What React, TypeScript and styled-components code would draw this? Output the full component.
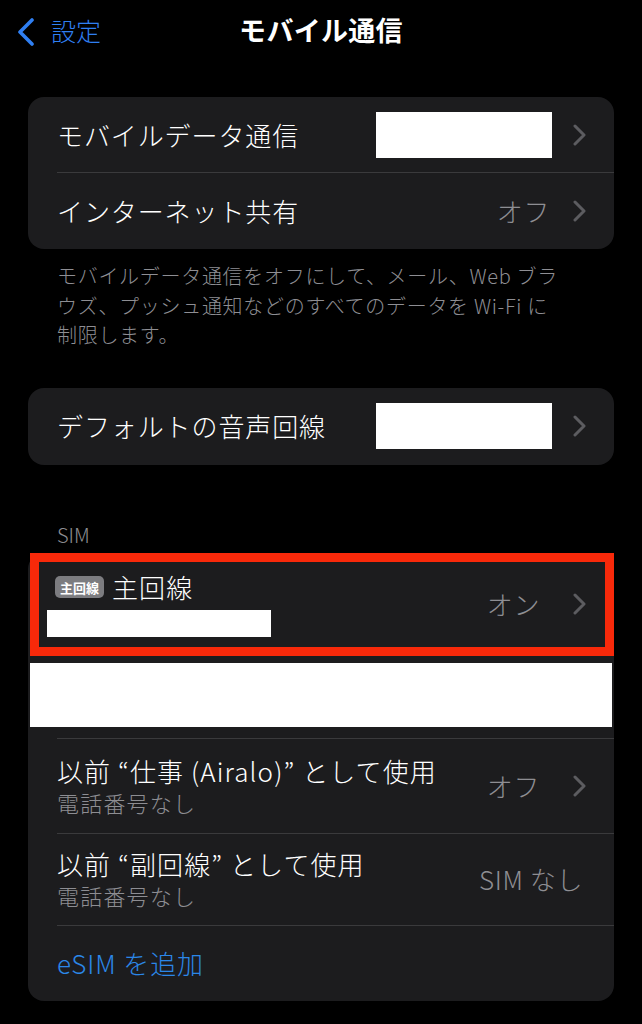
import styled, { createGlobalStyle } from "styled-components";

const GlobalStyle = createGlobalStyle`
	body {
		margin: 0;
		background: #000000;
		font-family: "Noto Sans CJK JP", "Noto Sans", sans-serif;
		font-weight: 300;
	}
`;

const Page = styled.div`
	width: 642px;
	height: 1024px;
	background: #000000;
	color: #ffffff;
	overflow: hidden;
`;

const NavBar = styled.header`
	display: grid;
	grid-template-columns: 1fr auto 1fr;
	align-items: center;
	height: 58px;
	padding: 0 16px;
`;

const BackButton = styled.div`
	display: flex;
	align-items: center;
	gap: 15px;
	color: #2f7ff2;
	font-size: 25px;
	line-height: 1;
	padding-top: 2px;

	svg {
		margin-top: 4px;
	}
`;

const NavTitle = styled.h1`
	margin: 0;
	font-size: 27px;
	font-weight: 700;
	letter-spacing: 0.3px;
`;

const Content = styled.main`
	display: flex;
	flex-direction: column;
	padding: 0 28px;
`;

const Card = styled.section<{ $top: number }>`
	display: flex;
	flex-direction: column;
	margin-top: ${(p) => p.$top}px;
	background: #1c1c1e;
	border-radius: 16px;
`;

const Row = styled.div<{ $height: number; $padRight?: number }>`
	display: flex;
	align-items: center;
	height: ${(p) => p.$height}px;
	padding: 0 ${(p) => p.$padRight ?? 28}px 0 29px;
`;

const Divider = styled.div`
	height: 1px;
	margin-left: 29px;
	background: #3a3a3c;
`;

const Label = styled.span<{ $blue?: boolean }>`
	flex: 1;
	font-size: 26px;
	line-height: 32px;
	letter-spacing: 0.9px;
	color: ${(p) => (p.$blue ? "#2b87e8" : "#ffffff")};
`;

const TextCol = styled.div`
	flex: 1;
	display: flex;
	flex-direction: column;
`;

const Title = styled.span`
	font-size: 26px;
	line-height: 32px;
	letter-spacing: 1.1px;
	white-space: pre;
`;

const Subtitle = styled.span`
	font-size: 22px;
	line-height: 30px;
	color: #8d8d92;
	letter-spacing: 1.2px;
`;

const Value = styled.span<{ $gap: number }>`
	font-size: 26px;
	line-height: 32px;
	color: #8e8e93;
	letter-spacing: 0.6px;
	margin-right: ${(p) => p.$gap}px;
`;

const Redaction = styled.div<{ $w: number; $h: number; $gap?: number }>`
	width: ${(p) => p.$w}px;
	height: ${(p) => p.$h}px;
	margin-right: ${(p) => p.$gap ?? 0}px;
	background: #ffffff;
`;

const Footnote = styled.p`
	margin: 0;
	padding: 12px 29px 0;
	font-size: 20px;
	line-height: 29.5px;
	color: #8e8e93;
	letter-spacing: 0.7px;
`;

const SectionHeader = styled.div`
	margin-top: 57px;
	padding-left: 29px;
	font-size: 20px;
	line-height: 26px;
	color: #8e8e93;
`;

const HighlightRow = styled.div`
	display: flex;
	align-items: center;
	height: 103px;
	margin-left: 2px;
	padding: 0 19px 0 16px;
	border: 9px solid #f8290a;
	box-sizing: border-box;
`;

const LineHead = styled.div`
	display: flex;
	align-items: center;
	gap: 8px;
`;

const Badge = styled.span`
	display: inline-flex;
	align-items: center;
	height: 22px;
	padding: 0 5px;
	border-radius: 5px;
	background: #7c7c80;
	color: #ffffff;
	font-size: 13px;
	font-weight: 700;
`;

const NumberMask = styled.div`
	width: 224px;
	height: 27px;
	margin: 7px 0 0 -8px;
	background: #ffffff;
`;

const RedactedRow = styled.div`
	padding: 7px 2px 11px;

	div {
		height: 64px;
		background: #ffffff;
	}
`;

const Chevron = () => (
	<svg width="13" height="22" viewBox="0 0 13 22" fill="none">
		<polyline
			points="2,2 11,11 2,20"
			stroke="#5c5c60"
			strokeWidth="3"
			strokeLinecap="round"
			strokeLinejoin="round"
		/>
	</svg>
);

const BackChevron = () => (
	<svg width="20" height="28" viewBox="0 0 20 28" fill="none">
		<polyline
			points="16,2 4,14 16,26"
			stroke="#2f7ff2"
			strokeWidth="3.6"
			strokeLinecap="round"
			strokeLinejoin="round"
		/>
	</svg>
);

export default function App() {
	return (
		<Page>
			<GlobalStyle />
			<NavBar>
				<BackButton>
					<BackChevron />
					<span>設定</span>
				</BackButton>
				<NavTitle>モバイル通信</NavTitle>
				<span />
			</NavBar>

			<Content>
				<Card $top={39}>
					<Row $height={75}>
						<Label>モバイルデータ通信</Label>
						<Redaction $w={176} $h={46} $gap={21} />
						<Chevron />
					</Row>
					<Divider />
					<Row $height={76}>
						<Label>インターネット共有</Label>
						<Value $gap={23}>オフ</Value>
						<Chevron />
					</Row>
				</Card>

				<Footnote>
					モバイルデータ通信をオフにして、メール、Web ブラ
					<br />
					ウズ、プッシュ通知などのすべてのデータを Wi-Fi に
					<br />
					制限します。
				</Footnote>

				<Card $top={38}>
					<Row $height={77}>
						<Label>デフォルトの音声回線</Label>
						<Redaction $w={176} $h={46} $gap={21} />
						<Chevron />
					</Row>
				</Card>

				<SectionHeader>SIM</SectionHeader>

				<Card $top={5}>
					<HighlightRow>
						<TextCol>
							<LineHead>
								<Badge>主回線</Badge>
								<Title>主回線</Title>
							</LineHead>
							<NumberMask />
						</TextCol>
						<Value $gap={33}>オン</Value>
						<Chevron />
					</HighlightRow>
					<RedactedRow>
						<div />
					</RedactedRow>
					<Divider />
					<Row $height={94}>
						<TextCol>
							<Title>以前 “仕事 (Airalo)” として使用</Title>
							<Subtitle>電話番号なし</Subtitle>
						</TextCol>
						<Value $gap={33}>オフ</Value>
						<Chevron />
					</Row>
					<Divider />
					<Row $height={91} $padRight={31}>
						<TextCol>
							<Title>以前 “副回線” として使用</Title>
							<Subtitle>電話番号なし</Subtitle>
						</TextCol>
						<Value $gap={0}>SIM なし</Value>
					</Row>
					<Divider />
					<Row $height={75}>
						<Label $blue>eSIM を追加</Label>
					</Row>
				</Card>
			</Content>
		</Page>
	);
}
